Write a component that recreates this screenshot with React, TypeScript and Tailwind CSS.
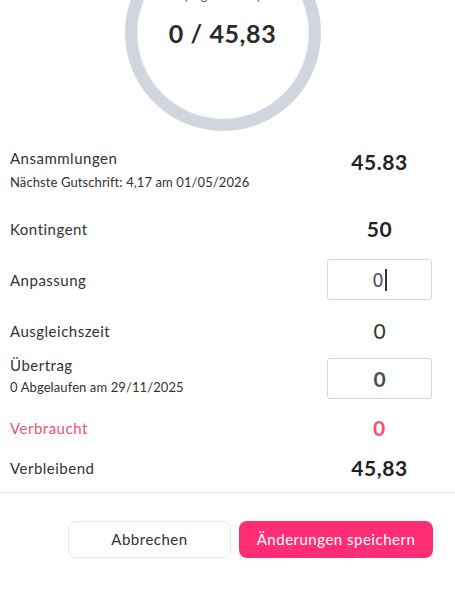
import React from 'react';

const font = { fontFamily: 'Lato, "Open Sans", sans-serif' };

function Row({ label, sub, value, labelClass, className, align = 'center' }: {
  label: string;
  sub?: string;
  value: React.ReactNode;
  labelClass?: string;
  className?: string;
  align?: 'start' | 'center';
}) {
  return (
    <div
      className={`flex justify-between pl-[10px] pr-[23px] ${align === 'start' ? 'items-start' : 'items-center'} ${className ?? ''}`}
    >
      <div className="flex flex-col">
        <span className={`text-[15px] leading-[20px] tracking-[0.5px] ${labelClass ?? 'text-[#333]'}`}>{label}</span>
        {sub && <span className="mt-[5px] text-[13px] leading-[18px] tracking-[0.1px] text-[#333]">{sub}</span>}
      </div>
      <div className="w-[105px] text-center">{value}</div>
    </div>
  );
}

const big = 'text-[21px] font-bold leading-[28px] tracking-[0.6px]';

export default function App() {
  return (
    <div className="w-[455px] h-[597px] overflow-hidden bg-white" style={font}>
      <div className="flex justify-center">
        <div className="-mt-[65px] ml-[-10px] flex h-[196px] w-[196px] flex-col items-center justify-center rounded-full border-[12px] border-[#d1d5de] pb-[32px] shadow-[inset_0_0_2px_rgba(120,140,220,0.35)]">
          <span className="text-[13px] leading-[16px] tracking-[0.2px] text-[#555]">(Tagesurlaub)</span>
          <span className="mt-[15px] text-[25px] font-bold leading-[30px] tracking-[0.6px] text-[#2b2b2b]">0 / 45,83</span>
        </div>
      </div>

      <Row
        className="mt-[17px]"
        align="start"
        label="Ansammlungen"
        sub="Nächste Gutschrift: 4,17 am 01/05/2026"
        value={<span className={`${big} text-[#222]`}>45.83</span>}
      />
      <Row
        className="mt-[24px]"
        label="Kontingent"
        value={<span className={`${big} text-[#222]`}>50</span>}
      />
      <div className="mt-[16px] flex items-center justify-between pl-[10px] pr-[23px]">
        <span className="text-[15px] leading-[20px] tracking-[0.5px] text-[#333]">Anpassung</span>
        <div className="flex h-[41px] w-[105px] items-center justify-center rounded-[3px] border border-[#d4d7dd]">
          <span className="text-[20px] leading-[24px] text-[#555]" style={{ fontFamily: '"DejaVu Sans Condensed", "DejaVu Sans", sans-serif' }}>0</span>
          <span className="ml-[1px] h-[22px] w-[2px] bg-[#333]" />
        </div>
      </div>
      <Row
        className="mt-[17px]"
        label="Ausgleichszeit"
        value={<span className="text-[21px] leading-[28px] text-[#333]">0</span>}
      />
      <div className="mt-[10px] flex items-start justify-between pl-[10px] pr-[23px]">
        <div className="flex flex-col">
          <span className="text-[15px] leading-[20px] tracking-[0.5px] text-[#333]">Übertrag</span>
          <span className="mt-[3px] text-[13px] leading-[18px] tracking-[0.1px] text-[#333]">0 Abgelaufen am 29/11/2025</span>
        </div>
        <div className="mt-[3px] flex h-[41px] w-[105px] items-center justify-center rounded-[3px] border border-[#d4d7dd]">
          <span className="text-[21px] font-bold leading-[24px] text-[#4b4f58]">0</span>
        </div>
      </div>
      <Row
        className="mt-[15px]"
        label="Verbraucht"
        labelClass="text-[#f2536f]"
        value={<span className={`${big} text-[#f2536f]`}>0</span>}
      />
      <Row
        className="mt-[12px]"
        label="Verbleibend"
        value={<span className={`${big} text-[#222]`}>45,83</span>}
      />

      <div className="mt-[10px] h-px bg-[#e8e9ec]" />

      <div className="mt-[28px] flex justify-end gap-[8px] pr-[22px]">
        <button className="h-[37px] w-[163px] rounded-[8px] border border-[#e6e7eb] bg-white text-[15px] tracking-[0.5px] text-[#333]">
          Abbrechen
        </button>
        <button className="h-[37px] w-[194px] rounded-[8px] bg-[#ff2e74] text-[15px] tracking-[0.5px] text-white">
          Änderungen speichern
        </button>
      </div>
    </div>
  );
}
